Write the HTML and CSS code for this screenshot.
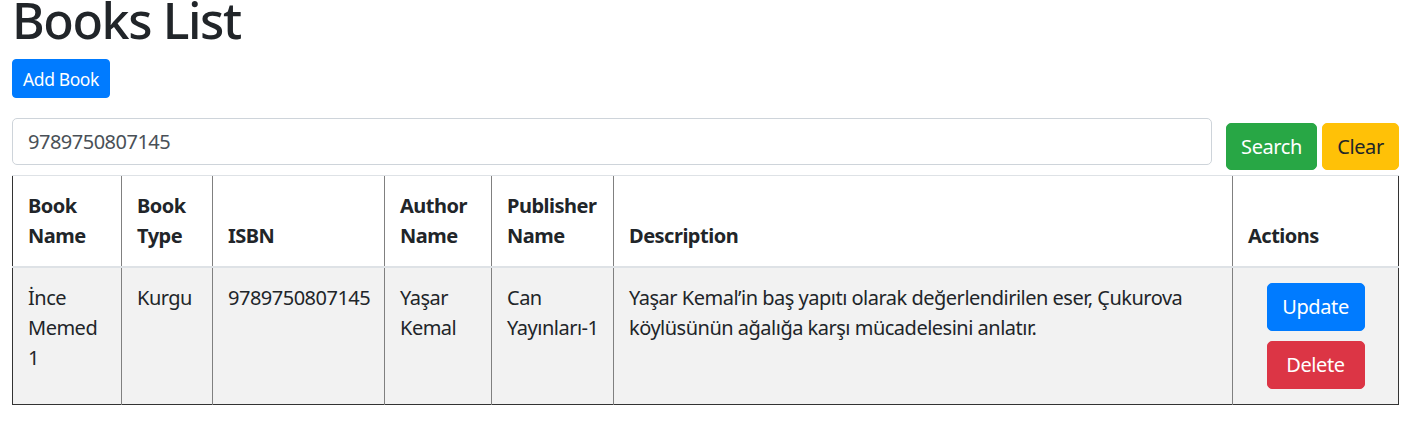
FILE: index.html
```html
<!DOCTYPE html>
<html lang="tr">
<head>
<meta charset="utf-8">
<title>Books List</title>
<link rel="stylesheet" href="styles.css">
</head>
<body>
<div class="page">
  <h1 class="title">Books List</h1>
  <button class="btn btn-sm btn-primary">Add Book</button>
  <div class="search-row">
    <input class="form-control" type="text" value="9789750807145">
    <button class="btn btn-success btn-search">Search</button>
    <button class="btn btn-warning btn-clear">Clear</button>
  </div>
  <table class="books">
    <colgroup>
      <col class="c-name"><col class="c-type"><col class="c-isbn"><col class="c-author"><col class="c-pub"><col class="c-desc"><col class="c-actions">
    </colgroup>
    <thead>
      <tr>
        <th>Book Name</th>
        <th>Book Type</th>
        <th>ISBN</th>
        <th>Author Name</th>
        <th>Publisher Name</th>
        <th>Description</th>
        <th>Actions</th>
      </tr>
    </thead>
    <tbody>
      <tr>
        <td>İnce Memed 1</td>
        <td>Kurgu</td>
        <td>9789750807145</td>
        <td>Yaşar Kemal</td>
        <td>Can Yayınları-1</td>
        <td>Yaşar Kemal’in baş yapıtı olarak değerlendirilen eser, Çukurova köylüsünün ağalığa karşı mücadelesini anlatır.</td>
        <td class="actions">
          <button class="btn btn-primary btn-block-act">Update</button>
          <button class="btn btn-danger btn-block-act">Delete</button>
        </td>
      </tr>
    </tbody>
  </table>
</div>
</body>
</html>
```
FILE: styles.css
```css
* { box-sizing: border-box; }
html, body { margin: 0; padding: 0; background: #fff; }
body {
  font-family: "Segoe UI", "Noto Sans", "Open Sans", sans-serif;
  font-size: 20px;
  line-height: 1.5;
  letter-spacing: -0.5px;
  color: #212529;
}
.page { padding: 0 12px; width: 1411px; }
.title {
  font-size: 50px;
  font-weight: 500;
  line-height: 40px;
  letter-spacing: -1.4px;
  margin: 0 0 19px 0;
}
.btn {
  display: inline-block;
  font-family: inherit;
  font-weight: 400;
  letter-spacing: -0.4px;
  text-align: center;
  border: 1px solid transparent;
  font-size: 20px;
  line-height: 30px;
  padding: 7.5px 15px;
  border-radius: 5px;
  cursor: pointer;
}
.btn-sm {
  font-size: 17.5px;
  line-height: 26px;
  padding: 5.5px 10px;
  border-radius: 4px;
}
.btn-primary { background: #007bff; border-color: #007bff; color: #fff; }
.btn-success { background: #28a745; border-color: #28a745; color: #fff; }
.btn-warning { background: #ffc107; border-color: #ffc107; color: #212529; }
.btn-danger { background: #dc3545; border-color: #dc3545; color: #fff; }
.search-row {
  display: flex;
  align-items: flex-start;
  margin-top: 20px;
}
.form-control {
  flex: 1;
  height: 47px;
  font-family: inherit;
  font-size: 20px;
  line-height: 30px;
  letter-spacing: -0.5px;
  padding: 7.5px 15px;
  color: #495057;
  border: 1px solid #ced4da;
  border-radius: 5px;
  background: #fff;
}
.btn-search { margin: 5px 0 0 14px; width: 91px; padding-left: 0; padding-right: 0; }
.btn-clear { margin: 5px 0 0 5px; width: 77px; padding-left: 0; padding-right: 0; }
.books {
  margin-top: 5px;
  width: 1386px;
  table-layout: fixed;
  border-collapse: collapse;
  border-left: 1px solid #333;
  border-right: 1px solid #333;
  border-bottom: 1px solid #333;
}
.c-name { width: 109px; }
.c-type { width: 91px; }
.c-isbn { width: 172px; }
.c-author { width: 107px; }
.c-pub { width: 122px; }
.c-desc { width: 619px; }
.c-actions { width: 166px; }
.books th, .books td {
  padding: 15px;
  border-left: 1px solid #808080;
  text-align: left;
}
.books th {
  vertical-align: bottom;
  font-weight: 700;
  border-top: 1px solid #dee2e6;
  border-bottom: 2px solid #dee2e6;
}
.books td { vertical-align: top; }
.books tbody tr { background: #f2f2f2; }
.books th:first-child, .books td:first-child { border-left: 1px solid #333; }
.actions { text-align: center !important; }
.btn-block-act {
  display: block;
  margin: 0 auto 10px auto;
  width: 98px;
  padding-left: 0;
  padding-right: 0;
  height: 48px;
}
.btn-block-act:last-child { margin-bottom: 0; }
```
